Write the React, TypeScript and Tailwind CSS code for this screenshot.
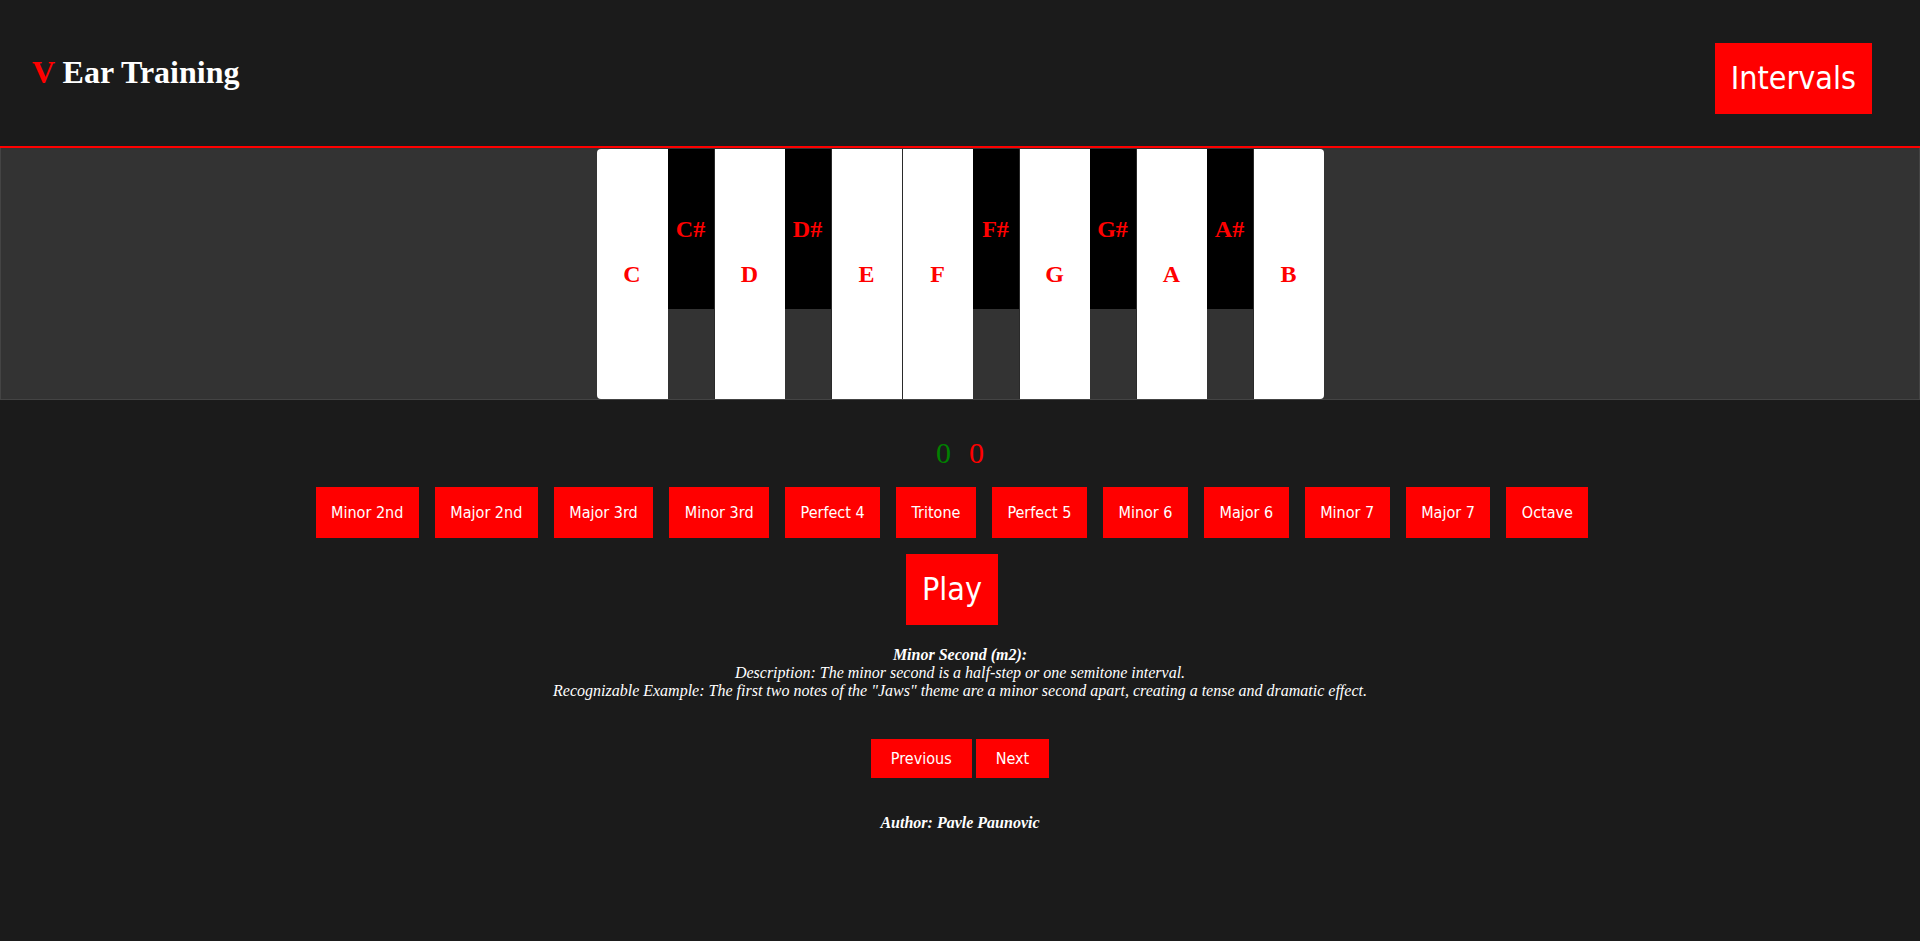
import { useState } from 'react'

const WHITE_KEYS = ['C', 'D', 'E', 'F', 'G', 'A', 'B']
// sharp that sits right after each white key (null where there is none)
const SHARPS: Record<string, string | null> = {
  C: 'C#', D: 'D#', E: null, F: 'F#', G: 'G#', A: 'A#', B: null,
}

const INTERVALS = [
  'Minor 2nd', 'Major 2nd', 'Major 3rd', 'Minor 3rd', 'Perfect 4', 'Tritone',
  'Perfect 5', 'Minor 6', 'Major 6', 'Minor 7', 'Major 7', 'Octave',
]

const sans = "font-['DejaVu_Sans_Condensed','Liberation_Sans',sans-serif]"
const serif = "font-['Liberation_Serif','Times_New_Roman',serif]"

export default function App() {
  const [correct] = useState(0)
  const [wrong] = useState(0)

  return (
    <div className={`min-h-screen bg-[#1b1b1b] text-white ${serif}`}>
      <header className="h-[148px] flex justify-between items-start pl-8 pr-12 pt-[43px] border-b-2 border-[#ff0000]">
        <h1 className="mt-[10px] text-[32px] font-bold leading-[38px]">
          <span className="text-[#ff0000]">V</span> Ear Training
        </h1>
        <button className={`bg-[#ff0000] text-white text-[32px] leading-[39px] px-4 py-4 ${sans}`}>
          Intervals
        </button>
      </header>

      <section className="bg-[#333] border border-[#444] border-t-0 pt-[1px] flex justify-center">
        <div className="flex h-[250px] rounded-[4px] overflow-hidden">
          {WHITE_KEYS.map((note, i) => (
            <div key={note} className="flex">
              <div className={`w-[71px] h-full bg-white flex items-center justify-center ${i > 0 ? 'border-l border-[#2a2a2a]' : ''}`}>
                <span className="text-[#ff0000] text-2xl font-bold">{note}</span>
              </div>
              {SHARPS[note] && (
                <div className="w-[46px] h-[160px] bg-black flex items-center justify-center">
                  <span className="text-[#ff0000] text-2xl font-bold">{SHARPS[note]}</span>
                </div>
              )}
            </div>
          ))}
        </div>
      </section>

      <div className="flex justify-center gap-[18px] mt-[36px] text-[30px] leading-[34px]">
        <span className="text-[#008000]">{correct}</span>
        <span className="text-[#ff0000]">{wrong}</span>
      </div>

      <div className="flex justify-center mt-[17px]">
        {INTERVALS.map(name => (
          <button key={name} className={`mr-4 bg-[#ff0000] text-white text-base leading-[19px] px-[15.5px] py-4 ${sans}`}>
            {name}
          </button>
        ))}
      </div>

      <div className="flex justify-center mt-4">
        <button className={`mr-4 bg-[#ff0000] text-white text-[32px] leading-[39px] px-4 py-4 ${sans}`}>
          Play
        </button>
      </div>

      <div className="mt-[21px] text-center italic text-base leading-[18px]">
        <div className="font-bold">Minor Second (m2):</div>
        <div>Description: The minor second is a half-step or one semitone interval.</div>
        <div>Recognizable Example: The first two notes of the "Jaws" theme are a minor second apart, creating a tense and dramatic effect.</div>
      </div>

      <div className="flex justify-center gap-1 mt-[39px]">
        <button className={`bg-[#ff0000] text-white text-base leading-[19px] px-5 py-[10px] ${sans}`}>Previous</button>
        <button className={`bg-[#ff0000] text-white text-base leading-[19px] px-5 py-[10px] ${sans}`}>Next</button>
      </div>

      <p className="mt-[33px] text-center italic font-bold text-base">Author: Pavle Paunovic</p>
    </div>
  )
}
